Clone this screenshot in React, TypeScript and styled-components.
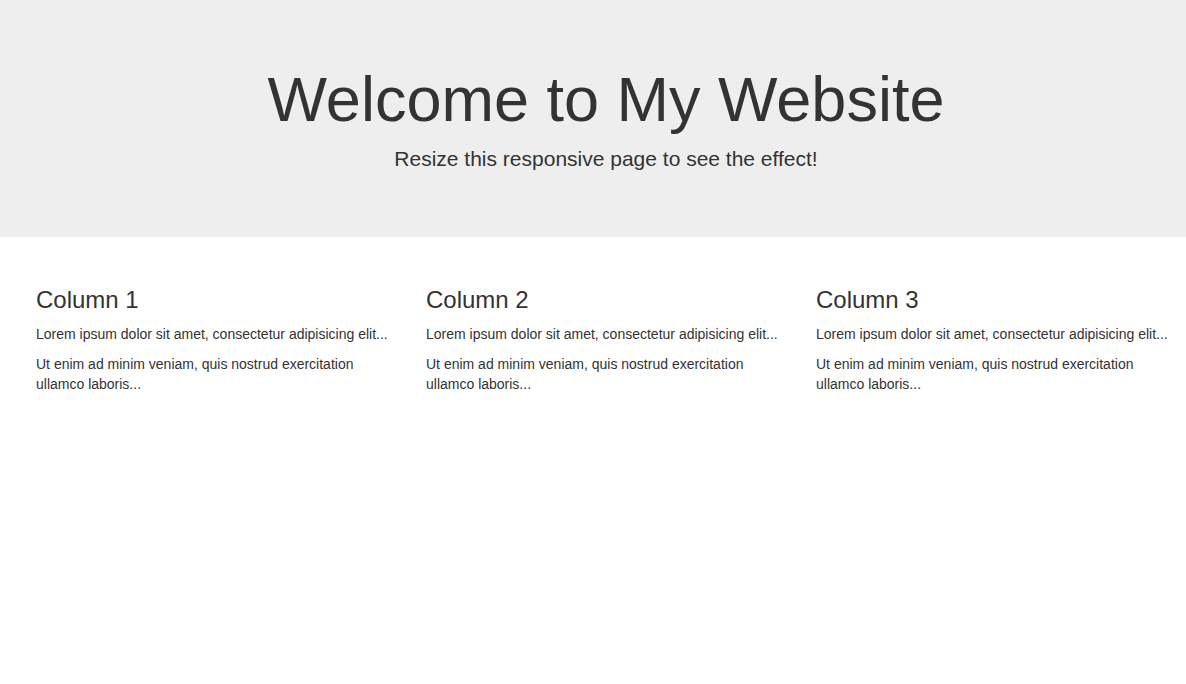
import styled, { createGlobalStyle } from "styled-components";

const GlobalStyle = createGlobalStyle`
  * {
    box-sizing: border-box;
  }
  body {
    margin: 0;
    font-family: "Liberation Sans", Arial, Helvetica, sans-serif;
    font-size: 14px;
    line-height: 1.42857143;
    color: #333;
    background: #fff;
  }
`;

const Container = styled.div`
  width: 1170px;
  margin-left: 21px;
  padding: 0 15px;
`;

const Jumbotron = styled.header`
  background: #eee;
  padding: 48px 0 48px;
  margin-bottom: 30px;
  text-align: center;
`;

const Title = styled.h1`
  font-size: 63px;
  font-weight: 500;
  line-height: 1.1;
  margin: 17px 0 10px;
`;

const Lead = styled.p`
  font-size: 21px;
  font-weight: 200;
  line-height: 1.4;
  margin: 0 0 15px;
`;

const Row = styled.div`
  display: grid;
  grid-template-columns: repeat(3, 1fr);
  margin: 0 -15px;
`;

const Col = styled.section`
  padding: 0 15px;
`;

const ColTitle = styled.h3`
  font-size: 24px;
  font-weight: 500;
  line-height: 1.1;
  margin: 20px 0 11px;
`;

const Text = styled.p`
  margin: 0 0 10px;
`;

const columns = ["Column 1", "Column 2", "Column 3"];

export default function App() {
  return (
    <>
      <GlobalStyle />
      <Jumbotron>
        <Container>
          <Title>Welcome to My Website</Title>
          <Lead>Resize this responsive page to see the effect!</Lead>
        </Container>
      </Jumbotron>
      <Container>
        <Row>
          {columns.map((c) => (
            <Col key={c}>
              <ColTitle>{c}</ColTitle>
              <Text>Lorem ipsum dolor sit amet, consectetur adipisicing elit...</Text>
              <Text>Ut enim ad minim veniam, quis nostrud exercitation ullamco laboris...</Text>
            </Col>
          ))}
        </Row>
      </Container>
    </>
  );
}
